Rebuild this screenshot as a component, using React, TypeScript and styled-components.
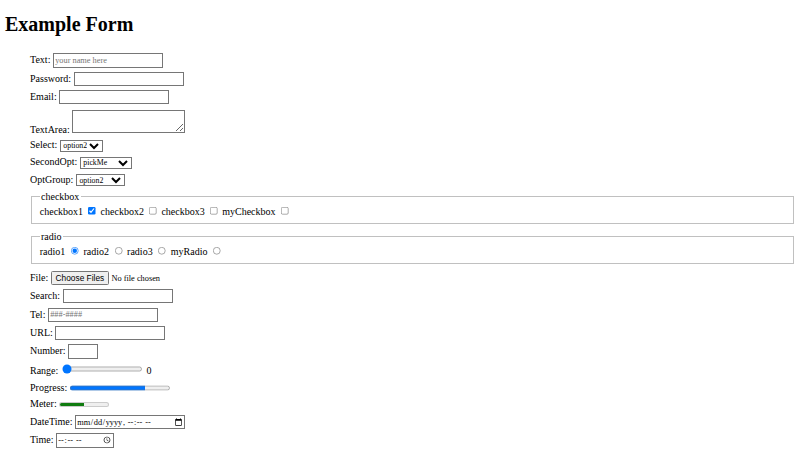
import styled, { createGlobalStyle } from "styled-components";

const GlobalStyle = createGlobalStyle`
  body {
    margin: 0;
    font-family: "Liberation Serif", "Times New Roman", serif;
    color: #000;
    background: #fff;
  }
`;

// the reference is a 1280x720 page shown at 800x450
const Page = styled.div`
  zoom: 0.625;
  padding: 0 8px 8px;
`;

const Title = styled.h1`
  font-size: 32px;
  font-weight: bold;
  margin: 21.44px 0;
`;

const Form = styled.form`
  padding: 5.5px 0 0 40px;
  font-size: 16px;
  input,
  select,
  textarea {
    font-family: "Liberation Serif", serif;
    font-size: 13.33px;
  }
  input[type="text"],
  input[type="password"],
  input[type="email"],
  input[type="search"],
  input[type="tel"],
  input[type="url"],
  input[type="datetime-local"] {
    box-sizing: border-box;
    height: 23px;
    width: 176px;
  }
  input[type="number"] {
    box-sizing: border-box;
    height: 23px;
    width: 48px;
  }
  input[type="time"] {
    box-sizing: border-box;
    height: 23px;
    width: 93px;
  }
  textarea {
    box-sizing: border-box;
    width: 181px;
    height: 37px;
  }
  select {
    box-sizing: border-box;
    height: 19px;
    font-size: 12.5px;
    padding: 0 0 0 1px;
  }
  input[type="file"]::file-selector-button {
    font-family: "Liberation Sans", Arial, sans-serif;
    height: 23px;
  }
`;

const Row = styled.div<{ gap?: number }>`
  margin-bottom: ${({ gap }) => gap ?? 6.5}px;
`;

const Group = styled.fieldset`
  margin: 0 2px 10px;
  padding: 0.35em 0.75em 0.625em;
  border: 2px groove #c0c0c0;
  legend {
    padding: 0 2px;
  }
`;

const Picker = styled.select<{ w?: number }>`
  width: ${({ w }) => (w ? `${w}px` : "auto")};
`;

const App = () => {
  return (
    <Page>
      <GlobalStyle />
      <Title>Example Form</Title>
      <Form onSubmit={(e) => e.preventDefault()}>
        <Row>
          <label>Text: </label>
          <input type="text" placeholder="your name here" />
        </Row>
        <Row>
          <label>Password: </label>
          <input type="password" />
        </Row>
        <Row gap={9}>
          <label>Email: </label>
          <input type="email" />
        </Row>
        <Row>
          <label>TextArea: </label>
          <textarea />
        </Row>
        <Row gap={7.5}>
          <label>Select: </label>
          <Picker defaultValue="option2">
            <option>option1</option>
            <option>option2</option>
          </Picker>
        </Row>
        <Row gap={7.5}>
          <label>SecondOpt: </label>
          <Picker w={83} defaultValue="pickMe">
            <option>pickMe</option>
            <option>another</option>
          </Picker>
        </Row>
        <Row gap={7.5}>
          <label>OptGroup: </label>
          <Picker w={78} defaultValue="option2">
            <optgroup label="group1">
              <option>option1</option>
              <option>option2</option>
            </optgroup>
          </Picker>
        </Row>
        <Group>
          <legend>checkbox</legend>
          <label>checkbox1 </label>
          <input type="checkbox" defaultChecked /> <label>checkbox2 </label>
          <input type="checkbox" /> <label>checkbox3 </label>
          <input type="checkbox" /> <label>myCheckbox </label>
          <input type="checkbox" />
        </Group>
        <Group>
          <legend>radio</legend>
          <label>radio1 </label>
          <input type="radio" name="r" defaultChecked /> <label>radio2 </label>
          <input type="radio" name="r" /> <label>radio3 </label>
          <input type="radio" name="r" /> <label>myRadio </label>
          <input type="radio" name="r" />
        </Group>
        <Row>
          <label>File: </label>
          <input type="file" multiple />
        </Row>
        <Row>
          <label>Search: </label>
          <input type="search" />
        </Row>
        <Row>
          <label>Tel: </label>
          <input type="tel" placeholder="###-####" />
        </Row>
        <Row>
          <label>URL: </label>
          <input type="url" />
        </Row>
        <Row>
          <label>Number: </label>
          <input type="number" />
        </Row>
        <Row gap={9}>
          <label>Range: </label>
          <input type="range" min={0} max={100} defaultValue={0} /> <output>0</output>
        </Row>
        <Row gap={9}>
          <label>Progress: </label>
          <progress value={75} max={100} />
        </Row>
        <Row gap={9}>
          <label>Meter: </label>
          <meter value={0.5} />
        </Row>
        <Row>
          <label>DateTime: </label>
          <input type="datetime-local" />
        </Row>
        <Row>
          <label>Time: </label>
          <input type="time" />
        </Row>
      </Form>
    </Page>
  );
};

export default App;
